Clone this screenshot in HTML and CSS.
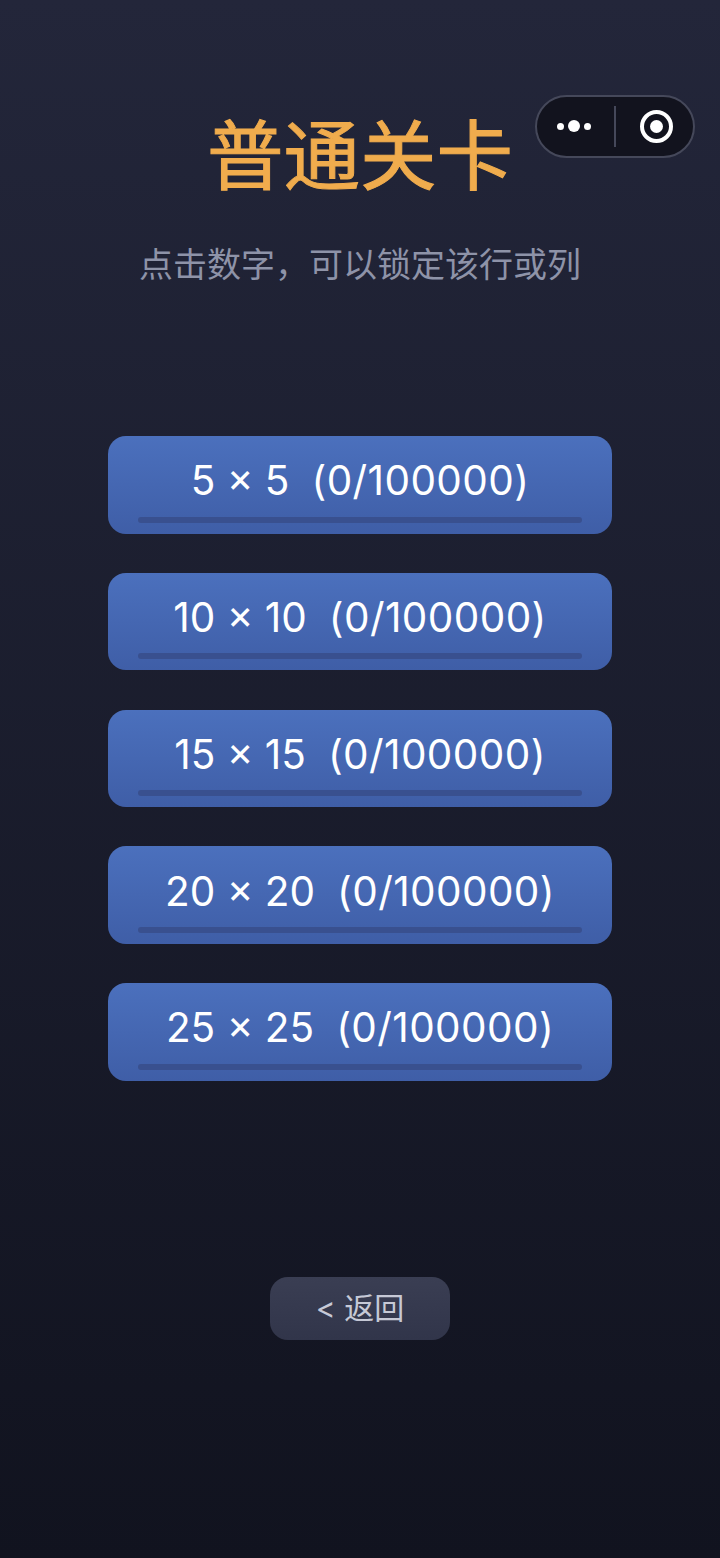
FILE: index.html
```html
<!DOCTYPE html>
<html lang="zh-CN">
<head>
    <meta charset="UTF-8">
    <meta name="viewport" content="width=device-width, initial-scale=1.0">
    <title>普通关卡</title>
    <link rel="stylesheet" href="styles.css">
</head>
<body>
    <div class="capsule">
        <div class="capsule-more">
            <span class="dot"></span>
            <span class="dot dot-big"></span>
            <span class="dot"></span>
        </div>
        <div class="capsule-line"></div>
        <div class="capsule-close">
            <span class="close-inner"></span>
        </div>
    </div>

    <main class="page">
        <h1 class="title">普通关卡</h1>
        <p class="subtitle">点击数字，可以锁定该行或列</p>

        <div class="levels">
            <button class="level">5 × 5<span class="level-count">(0/100000)</span></button>
            <button class="level">10 × 10<span class="level-count">(0/100000)</span></button>
            <button class="level">15 × 15<span class="level-count">(0/100000)</span></button>
            <button class="level">20 × 20<span class="level-count">(0/100000)</span></button>
            <button class="level">25 × 25<span class="level-count">(0/100000)</span></button>
        </div>

        <button class="back">&lt; 返回</button>
    </main>
</body>
</html>
```

FILE: styles.css
```css
* {
    box-sizing: border-box;
}

html, body {
    margin: 0;
    padding: 0;
}

body {
    position: relative;
    width: 720px;
    height: 1558px;
    overflow: hidden;
    background: linear-gradient(180deg, #23263a 0%, #11131f 100%);
    font-family: Inter, "Noto Sans CJK SC", sans-serif;
}

.page {
    display: flex;
    flex-direction: column;
    align-items: center;
    padding-top: 109px;
}

.title {
    margin: 0;
    height: 92px;
    line-height: 92px;
    font-size: 76.5px;
    font-weight: 400;
    color: #f0ac4d;
    -webkit-text-stroke: 1px #f0ac4d;
    transform: translateY(1px);
}

.subtitle {
    margin: 44px 0 0;
    height: 40px;
    line-height: 40px;
    font-size: 34px;
    color: #8e93a8;
}

.levels {
    display: flex;
    flex-direction: column;
    gap: 39.25px;
    margin-top: 151px;
}

.level {
    position: relative;
    display: block;
    width: 504px;
    height: 97.5px;
    padding: 0 0 8px;
    border: none;
    border-radius: 18px;
    background: linear-gradient(180deg, #4b70bd 0%, #3f5ea7 100%);
    color: #fff;
    font-family: inherit;
    font-size: 40.5px;
    white-space: nowrap;
}

.level-count {
    margin-left: 22px;
    letter-spacing: 0.4px;
}

.level::after {
    content: "";
    position: absolute;
    left: 30px;
    right: 30px;
    bottom: 11px;
    height: 6px;
    border-radius: 3px;
    background: #39508f;
}

.back {
    width: 180px;
    height: 62.5px;
    margin-top: 196.5px;
    padding: 0 0 4px;
    border: none;
    border-radius: 18px;
    background: linear-gradient(180deg, #3a3e53 0%, #31354a 100%);
    color: #c6c9d6;
    font-family: inherit;
    font-size: 30px;
}

.capsule {
    position: absolute;
    top: 94.5px;
    left: 535px;
    display: flex;
    align-items: center;
    width: 160px;
    height: 63px;
    border: 2px solid #45485a;
    border-radius: 32px;
    background: #12131e;
}

.capsule-more {
    display: flex;
    align-items: center;
    justify-content: center;
    gap: 4px;
    width: 74px;
    margin-right: 3px;
}

.dot {
    width: 7px;
    height: 7px;
    border-radius: 50%;
    background: #fff;
}

.dot-big {
    width: 12px;
    height: 12px;
}

.capsule-line {
    width: 2px;
    height: 41px;
    background: #45485a;
}

.capsule-close {
    display: flex;
    align-items: center;
    justify-content: center;
    width: 33px;
    height: 33px;
    margin-left: 23.5px;
    border: 4px solid #fff;
    border-radius: 50%;
}

.close-inner {
    width: 13px;
    height: 13px;
    border-radius: 50%;
    background: #fff;
}
```
